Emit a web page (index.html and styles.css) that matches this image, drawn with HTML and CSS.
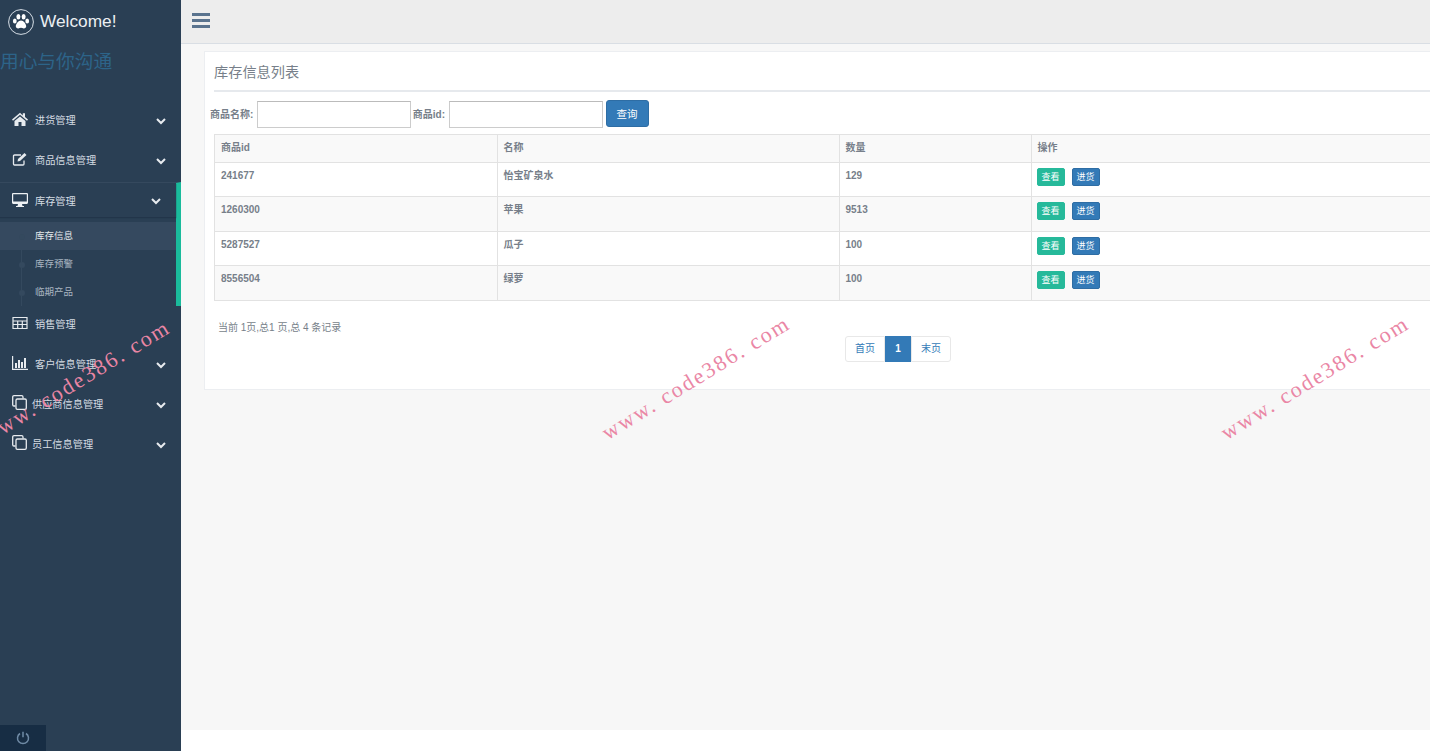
FILE: index.html
```html
<!DOCTYPE html>
<html lang="zh-CN">
<head>
    <meta charset="UTF-8">
    <title>库存信息列表</title>
    <link rel="stylesheet" href="styles.css">
</head>
<body>
    <aside class="sidebar">
        <div class="brand">
            <span class="brand-logo">
                <svg viewBox="0 0 26 26" width="26" height="26">
                    <circle cx="13" cy="13" r="12.4" fill="none" stroke="#d5dde5" stroke-width="1"/>
                    <ellipse cx="6.8" cy="12" rx="1.9" ry="2.5" fill="#fff"/>
                    <ellipse cx="10.4" cy="7.8" rx="2" ry="2.7" fill="#fff"/>
                    <ellipse cx="15.6" cy="7.8" rx="2" ry="2.7" fill="#fff"/>
                    <ellipse cx="19.2" cy="12" rx="1.9" ry="2.5" fill="#fff"/>
                    <path d="M13 11.5c-2.6 0-5.2 3.6-5.2 5.8 0 1.6 1.3 2.2 2.5 2.1 1-.1 1.8-.6 2.7-.6s1.700.5 2.700.6c1.200.1 2.500-.5 2.500-2.100 0-2.200-2.600-5.800-5.200-5.800z" fill="#fff"/>
                </svg>
            </span>
            <span class="brand-name">Welcome!</span>
        </div>
        <div class="slogan">用心与你沟通</div>

        <nav class="menu">
            <a class="menu-item">
                <svg class="menu-icon" viewBox="0 0 16 14" width="16" height="14"><path d="M8 .8 0 7.500l1 1.200L8 2.800l7 5.900 1-1.200-3-2.500V1.200h-2.200v2.300zM2.500 9v5H6.500V10h3v4h4V9L8 4.500z" fill="#e7ebef"/></svg>
                <span class="menu-label">进货管理</span>
                <svg class="chevron" viewBox="0 0 10 7" width="10" height="7"><path d="M1 1l4 4 4-4" fill="none" stroke="#e7ebef" stroke-width="2"/></svg>
            </a>
            <a class="menu-item">
                <svg class="menu-icon" viewBox="0 0 16 14" width="16" height="14"><path d="M12 8.500V12a1 1 0 0 1-1 1H2.500a1 1 0 0 1-1-1V4a1 1 0 0 1 1-1H9" fill="none" stroke="#e7ebef" stroke-width="1.300"/><path d="M5.500 9.500l.5-2.500 6.500-6 2 2-6.500 6z" fill="#e7ebef"/></svg>
                <span class="menu-label">商品信息管理</span>
                <svg class="chevron" viewBox="0 0 10 7" width="10" height="7"><path d="M1 1l4 4 4-4" fill="none" stroke="#e7ebef" stroke-width="2"/></svg>
            </a>

            <div class="menu-group">
                <a class="menu-item menu-item-open">
                    <svg class="menu-icon" viewBox="0 0 16 14" width="16" height="14"><path d="M1.200 0h13.600c.6 0 1.200.5 1.200 1.200v8.600c0 .7-.6 1.200-1.200 1.200H10l.5 2H12v1H4v-1h1.500l.5-2H1.200C.6 11 0 10.500 0 9.800V1.200C0 .5.600 0 1.200 0zM1.200 1.200v7.300h13.600V1.200z" fill="#eef1f4"/></svg>
                    <span class="menu-label">库存管理</span>
                    <svg class="chevron" viewBox="0 0 10 7" width="10" height="7"><path d="M1 1l4 4 4-4" fill="none" stroke="#e7ebef" stroke-width="2"/></svg>
                </a>
                <ul class="submenu">
                    <li class="submenu-item submenu-current">库存信息</li>
                    <li class="submenu-item">库存预警</li>
                    <li class="submenu-item">临期产品</li>
                </ul>
            </div>

            <a class="menu-item menu-item-short">
                <svg class="menu-icon" viewBox="0 0 16 14" width="16" height="14"><path d="M1 1.500h14v11H1zM1 5h14M1 8.500h14M5.700 5v7.500M10.300 5v7.500" fill="none" stroke="#e7ebef" stroke-width="1.200"/></svg>
                <span class="menu-label">销售管理</span>
            </a>
            <a class="menu-item">
                <svg class="menu-icon" viewBox="0 0 16 14" width="16" height="14"><path d="M.6 0v13.400H16" fill="none" stroke="#e7ebef" stroke-width="1.200"/><path d="M3 7h2v5H3zM6 4h2v8H6zM9 6h2v6H9zM12 2h2v10h-2z" fill="#e7ebef"/></svg>
                <span class="menu-label">客户信息管理</span>
                <svg class="chevron" viewBox="0 0 10 7" width="10" height="7"><path d="M1 1l4 4 4-4" fill="none" stroke="#e7ebef" stroke-width="2"/></svg>
            </a>
            <a class="menu-item menu-item-clone">
                <svg class="menu-icon" viewBox="0 0 15 15" width="15" height="15"><path d="M11 3.500V2a1.300 1.300 0 0 0-1.300-1.300H2A1.300 1.300 0 0 0 .7 2v7.700A1.300 1.300 0 0 0 2 11h1.500" fill="none" stroke="#e7ebef" stroke-width="1.300"/><rect x="4" y="4" width="10.300" height="10.300" rx="1.300" fill="none" stroke="#e7ebef" stroke-width="1.300"/></svg>
                <span class="menu-label">供应商信息管理</span>
                <svg class="chevron" viewBox="0 0 10 7" width="10" height="7"><path d="M1 1l4 4 4-4" fill="none" stroke="#e7ebef" stroke-width="2"/></svg>
            </a>
            <a class="menu-item menu-item-clone">
                <svg class="menu-icon" viewBox="0 0 15 15" width="15" height="15"><path d="M11 3.500V2a1.300 1.300 0 0 0-1.300-1.300H2A1.300 1.300 0 0 0 .7 2v7.700A1.300 1.300 0 0 0 2 11h1.500" fill="none" stroke="#e7ebef" stroke-width="1.300"/><rect x="4" y="4" width="10.300" height="10.300" rx="1.300" fill="none" stroke="#e7ebef" stroke-width="1.300"/></svg>
                <span class="menu-label">员工信息管理</span>
                <svg class="chevron" viewBox="0 0 10 7" width="10" height="7"><path d="M1 1l4 4 4-4" fill="none" stroke="#e7ebef" stroke-width="2"/></svg>
            </a>
        </nav>

        <div class="sidebar-footer">
            <a class="power-btn">
                <svg viewBox="0 0 14 14" width="14" height="14"><path d="M4 2.500a5.500 5.500 0 1 0 6 0M7 .8v5.500" fill="none" stroke="#6f8aa5" stroke-width="1.500"/></svg>
            </a>
        </div>
    </aside>

    <div class="right-col">
        <header class="top-nav">
            <svg class="nav-toggle" viewBox="0 0 18 15" width="18" height="15"><path d="M0 0h18v3H0zM0 6h18v3H0zM0 12h18v3H0z" fill="#5a738e"/></svg>
        </header>

        <main class="content">
            <section class="panel">
                <h2 class="panel-title">库存信息列表</h2>
                <form class="search-form">
                    <label class="search-label">商品名称:</label>
                    <input class="search-input" type="text">
                    <label class="search-label">商品id:</label>
                    <input class="search-input" type="text">
                    <button class="btn-search" type="button">查询</button>
                </form>

                <table class="stock-table">
                    <thead>
                        <tr>
                            <th class="col-id">商品id</th>
                            <th class="col-name">名称</th>
                            <th class="col-num">数量</th>
                            <th>操作</th>
                        </tr>
                    </thead>
                    <tbody>
                        <tr>
                            <td>241677</td>
                            <td>怡宝矿泉水</td>
                            <td>129</td>
                            <td><a class="btn-mini btn-view">查看</a><a class="btn-mini btn-stock">进货</a></td>
                        </tr>
                        <tr>
                            <td>1260300</td>
                            <td>苹果</td>
                            <td>9513</td>
                            <td><a class="btn-mini btn-view">查看</a><a class="btn-mini btn-stock">进货</a></td>
                        </tr>
                        <tr>
                            <td>5287527</td>
                            <td>瓜子</td>
                            <td>100</td>
                            <td><a class="btn-mini btn-view">查看</a><a class="btn-mini btn-stock">进货</a></td>
                        </tr>
                        <tr>
                            <td>8556504</td>
                            <td>绿萝</td>
                            <td>100</td>
                            <td><a class="btn-mini btn-view">查看</a><a class="btn-mini btn-stock">进货</a></td>
                        </tr>
                    </tbody>
                </table>

                <p class="page-info">当前 1页,总1 页,总 4 条记录</p>
                <div class="pager">
                    <a class="pager-item">首页</a>
                    <a class="pager-item pager-current">1</a>
                    <a class="pager-item">末页</a>
                </div>
            </section>
        </main>

        <div class="page-footer"></div>
    </div>

    <div class="watermark watermark-a">www. code386. com</div>
    <div class="watermark watermark-b">www. code386. com</div>
    <div class="watermark watermark-c">www. code386. com</div>
</body>
</html>
```

FILE: styles.css
```css
* {
    box-sizing: border-box;
}
html, body {
    height: 100%;
}
body {
    display: flex;
    margin: 0;
    overflow: hidden;
    position: relative;
    font-family: "Liberation Sans", "Noto Sans CJK SC", sans-serif;
    color: #777f8a;
    background-color: #fff;
}

/* sidebar */
.sidebar {
    display: flex;
    flex-direction: column;
    flex: 0 0 181px;
    height: 751px;
    background-color: #2a3f54;
}
.brand {
    display: flex;
    align-items: center;
    gap: 6px;
    height: 43px;
    padding-left: 8px;
}
.brand-logo {
    display: flex;
}
.brand-name {
    font-size: 17.300px;
    color: #eceff2;
}
.slogan {
    height: 56px;
    padding-top: 7px;
    font-size: 18.700px;
    line-height: 24px;
    color: #2d6489;
}
.menu-item {
    display: flex;
    align-items: center;
    height: 40px;
    padding: 0 15px 0 12px;
    font-size: 10.200px;
    color: #d5dce3;
}
.menu-icon {
    flex: none;
    margin-top: -1px;
}
.menu-label {
    flex: 1;
    margin-left: 7px;
}
.chevron {
    margin-top: 4px;
}
.menu-item-clone .menu-label {
    margin-left: 5px;
}
.menu-item-short {
    height: 37px;
    padding-bottom: 3px;
}
.menu-group {
    height: 124px;
    margin-top: 3px;
    border-right: 5px solid #1abb9c;
    border-top: 1px solid #35495e;
    background-color: #2a3f54;
}
.menu-item-open {
    height: 34px;
    box-shadow: 0 1px 1px #22354a;
}
.menu-item-open .chevron {
    margin-top: 2px;
}
.submenu {
    position: relative;
    margin: 5px 0 0;
    padding: 0;
    list-style: none;
}
.submenu::before {
    content: "";
    position: absolute;
    left: 21px;
    top: 0;
    bottom: 0;
    width: 1px;
    background-color: #34495e;
}
.submenu-item {
    position: relative;
    height: 28px;
    padding-left: 35px;
    font-size: 9.500px;
    line-height: 27px;
    color: #a9b5c1;
}
.submenu-item::before {
    content: "";
    position: absolute;
    left: 18.500px;
    top: 12px;
    width: 6px;
    height: 6px;
    border-radius: 50%;
    background-color: #34495e;
}
.submenu-current {
    background-color: #35495f;
    color: #e4e8ec;
}
.sidebar-footer {
    margin-top: auto;
    height: 26px;
}
.power-btn {
    display: flex;
    align-items: center;
    justify-content: center;
    width: 46px;
    height: 26px;
    background-color: #172d44;
}

/* right side */
.right-col {
    display: flex;
    flex-direction: column;
    flex: 1;
    min-width: 0;
    height: 751px;
}
.top-nav {
    display: flex;
    align-items: center;
    flex: 0 0 44px;
    padding: 0 0 2px 11px;
    background-color: #ededed;
    border-bottom: 1px solid #d9dee4;
}
.content {
    flex: 1;
    padding: 7px 0 0 23px;
    overflow: hidden;
    background-color: #f7f7f7;
}
.page-footer {
    flex: 0 0 21px;
    background-color: #fff;
}
.panel {
    width: 1388px;
    height: 339px;
    padding: 0 9px;
    background-color: #fff;
    border: 1px solid #eceef1;
}
.panel-title {
    height: 40px;
    margin: 0;
    padding-top: 10px;
    font-size: 14.200px;
    font-weight: 400;
    line-height: 20px;
    border-bottom: 2px solid #e6e9ed;
}
.search-form {
    display: flex;
    align-items: center;
    gap: 2px;
    height: 27px;
    margin: 9px 0 6px -4px;
}
.search-label {
    margin: -2px 2px 0 0;
    font-size: 10px;
    font-weight: 700;
}
.search-input {
    width: 153.500px;
    height: 27px;
    background-color: #fff;
    border: 1px solid #ccc;
    border-top-color: #bbb;
}
.btn-search {
    width: 43px;
    height: 27px;
    margin-left: 1px;
    margin-top: -2px;
    padding: 0;
    font-family: inherit;
    font-size: 10.500px;
    color: #fff;
    background-color: #337ab7;
    border: 1px solid #2e6da4;
    border-radius: 3px;
}
.stock-table {
    width: 1366px;
    table-layout: fixed;
    border-collapse: collapse;
    font-size: 10px;
}
.stock-table th, .stock-table td {
    padding: 0 6px;
    text-align: left;
    vertical-align: top;
    border: 1px solid #e2e2e2;
}
.stock-table th {
    height: 27.500px;
    font-weight: 700;
    line-height: 26px;
    background-color: #f9f9f9;
}
.stock-table td {
    height: 34.500px;
    padding-top: 6px;
    font-weight: 700;
    line-height: 13px;
}
.stock-table tbody tr:nth-child(even) td {
    background-color: #f9f9f9;
}
.col-id {
    width: 282.500px;
}
.col-name {
    width: 342px;
}
.col-num {
    width: 192px;
}
.btn-mini {
    display: inline-block;
    width: 28px;
    height: 18px;
    margin: -1px 7px 0 0;
    font-size: 9px;
    font-weight: 400;
    line-height: 17px;
    text-align: center;
    color: #fff;
    border-radius: 2px;
}
.btn-view {
    margin-left: -1px;
    background-color: #26b99a;
    border: 1px solid #26b99a;
}
.btn-stock {
    background-color: #337ab7;
    border: 1px solid #2e6da4;
}
.page-info {
    margin: 20px 0 0 4px;
    font-size: 10px;
    line-height: 14px;
}
.pager {
    display: flex;
    justify-content: center;
    margin-top: 1px;
}
.pager-item {
    width: 40px;
    height: 26px;
    font-size: 10px;
    line-height: 24px;
    text-align: center;
    color: #337ab7;
    background-color: #fff;
    border: 1px solid #e8e8e8;
}
.pager-item:first-child {
    border-radius: 3px 0 0 3px;
}
.pager-item:last-child {
    border-radius: 0 3px 3px 0;
}
.pager-current {
    width: 26px;
    font-weight: 700;
    color: #fff;
    background-color: #337ab7;
    border-color: #337ab7;
}

/* watermark over everything */
.watermark {
    position: absolute;
    width: 240px;
    font-family: "Liberation Serif", serif;
    font-size: 22px;
    line-height: 24px;
    letter-spacing: 2.100px;
    white-space: nowrap;
    text-align: center;
    color: #ea86a5;
    transform: rotate(-31.500deg);
}
.watermark-a {
    left: -44px;
    top: 370px;
}
.watermark-b {
    left: 576px;
    top: 366px;
}
.watermark-c {
    left: 1195px;
    top: 366px;
}
```
